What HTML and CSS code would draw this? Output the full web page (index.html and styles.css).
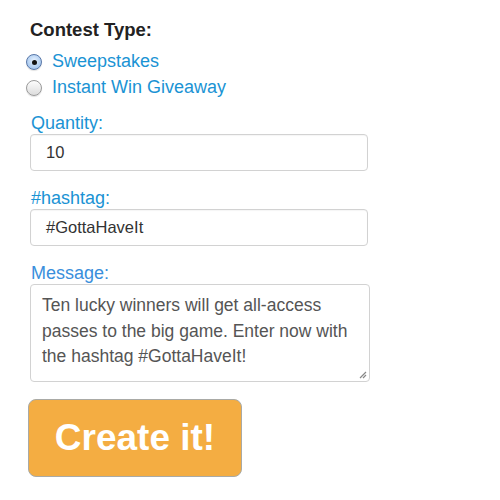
FILE: index.html
```
<!DOCTYPE html>
<html>
<head>
<meta charset="utf-8">
<link rel="stylesheet" href="styles.css">
</head>
<body>
<form class="form">
  <div class="title">Contest Type:</div>
  <div class="radios">
    <div class="radio-row"><span class="radio checked"></span><span class="radio-label">Sweepstakes</span></div>
    <div class="radio-row"><span class="radio"></span><span class="radio-label">Instant Win Giveaway</span></div>
  </div>
  <div class="field">
    <div class="label">Quantity:</div>
    <div class="input">10</div>
  </div>
  <div class="field">
    <div class="label">#hashtag:</div>
    <div class="input">#GottaHaveIt</div>
  </div>
  <div class="field">
    <div class="label label-msg">Message:</div>
    <div class="textarea">Ten lucky winners will get all-access passes to the big game. Enter now with the hashtag #GottaHaveIt!<svg class="grip" width="9" height="9" viewBox="0 0 9 9"><path d="M8 2 L2 8 M8 5 L5 8" stroke="#888" stroke-width="1.2" fill="none"/></svg></div>
  </div>
  <div class="button">Create it!</div>
</form>
</body>
</html>
```
FILE: styles.css
```
html, body {
  margin: 0;
  padding: 0;
  background: #fff;
}
body {
  font-family: "Liberation Sans", Arial, sans-serif;
}
.form {
  padding: 19px 0 0 30px;
  width: 340px;
}
.title {
  font-size: 18.5px;
  line-height: 21px;
  font-weight: bold;
  color: #222;
}
.radios {
  margin-top: 9px;
  margin-left: -4px;
}
.radio-row {
  display: flex;
  align-items: center;
  height: 25.5px;
}
.radio {
  width: 16px;
  height: 16px;
  border-radius: 50%;
  box-sizing: border-box;
  border: 1px solid #9a9a9a;
  background: linear-gradient(#fdfdfd, #dcdcdc);
  margin-right: 10px;
  margin-top: 1px;
  display: flex;
  align-items: center;
  justify-content: center;
  box-shadow: 0 1px 1px rgba(0,0,0,0.12);
}
.radio.checked {
  border-color: #5877a8;
  background: radial-gradient(circle at 50% 40%, #e8f3ff 0%, #a9c9ef 70%, #7da6dd 100%);
}
.radio.checked::after {
  content: "";
  width: 5px;
  height: 5px;
  border-radius: 50%;
  background: #111;
}
.radio-label {
  font-size: 18px;
  color: #1a93d4;
  line-height: 21px;
}
.field {
  margin-top: 13px;
}
.field + .field {
  margin-top: 17px;
}
.label {
  font-size: 18px;
  line-height: 21px;
  color: #1a93d4;
  padding-left: 1px;
}
.label-msg {
  color: #3a8fdc;
}
.input {
  box-sizing: border-box;
  width: 338px;
  height: 37px;
  border: 1px solid #d2d2d2;
  border-radius: 4px;
  box-shadow: inset 0 1px 1px rgba(0,0,0,0.04);
  font-size: 16.5px;
  color: #333;
  padding-left: 15px;
  display: flex;
  align-items: center;
}
.textarea {
  position: relative;
  box-sizing: border-box;
  width: 340px;
  height: 98px;
  border: 1px solid #d2d2d2;
  border-radius: 4px;
  font-size: 17.5px;
  line-height: 25.5px;
  color: #555;
  padding: 8px 6px 0 11px;
}
.grip {
  position: absolute;
  right: 2px;
  bottom: 2px;
}
.button {
  margin-top: 17px;
  margin-left: -2px;
  box-sizing: border-box;
  width: 214px;
  height: 78px;
  background: #f4ad42;
  border: 1px solid #a9aaa6;
  border-radius: 8px;
  color: #fff;
  font-weight: bold;
  font-size: 37px;
  display: flex;
  align-items: center;
  justify-content: center;
}
```
